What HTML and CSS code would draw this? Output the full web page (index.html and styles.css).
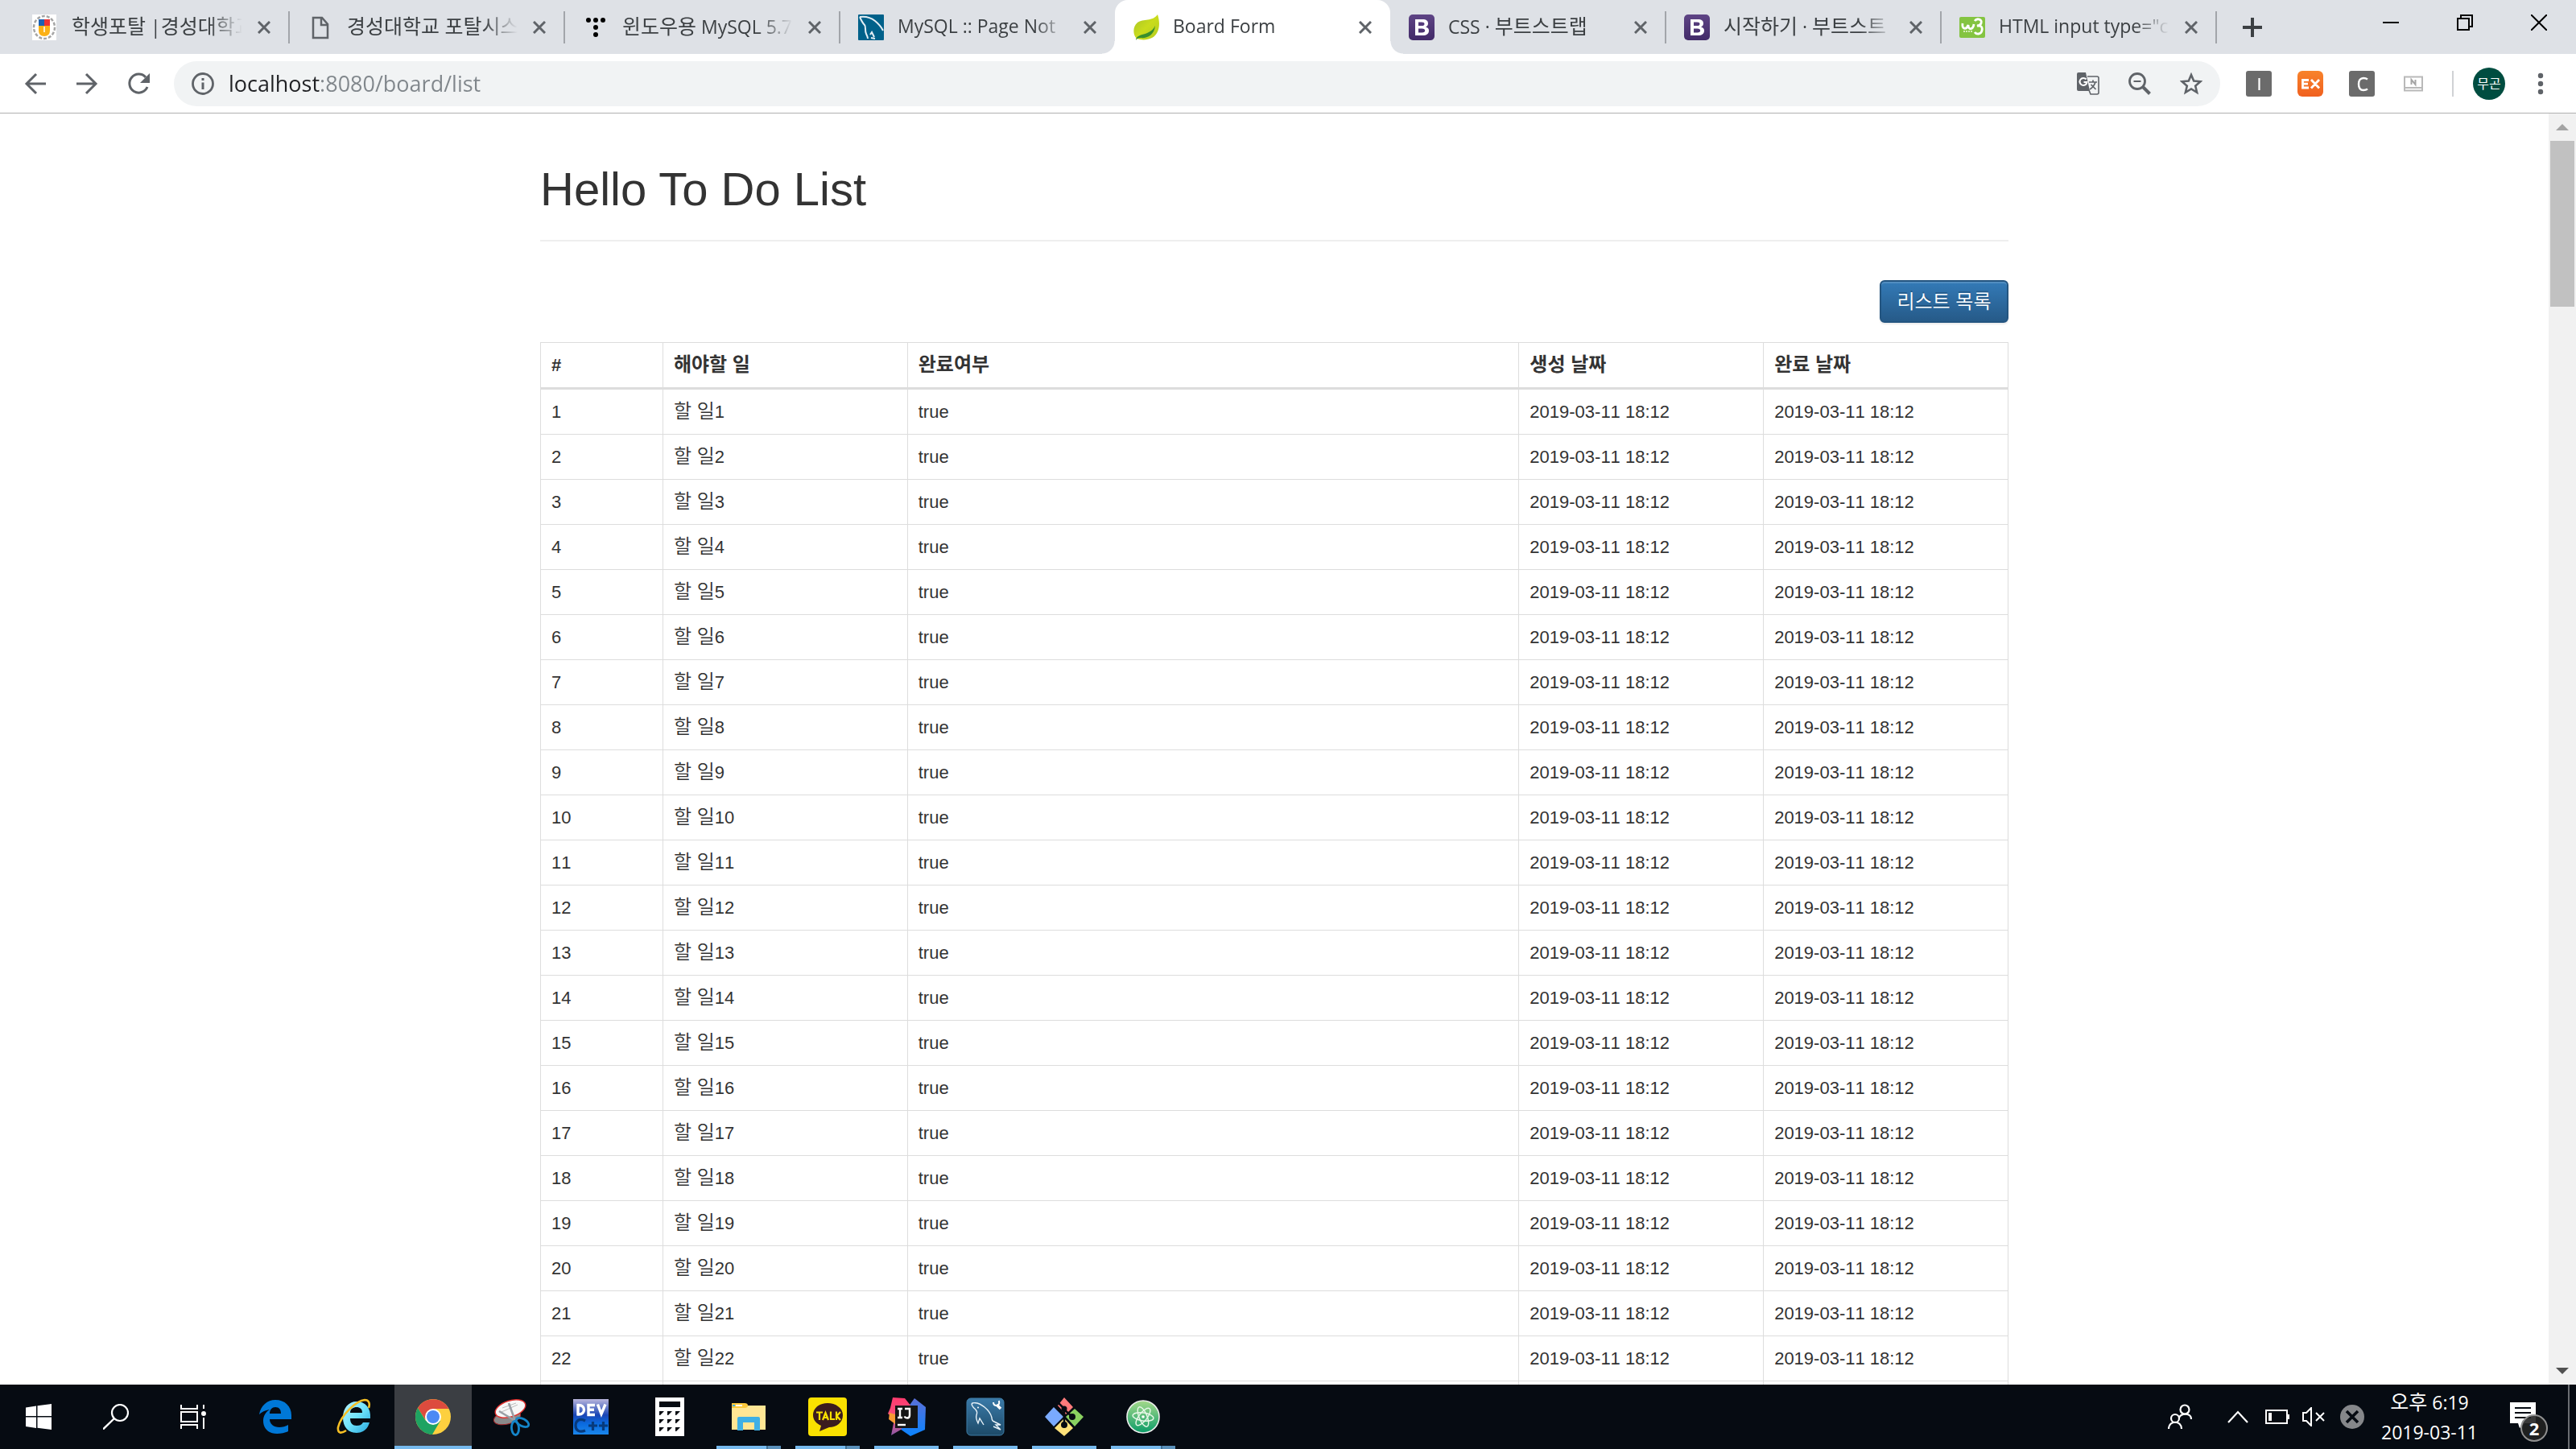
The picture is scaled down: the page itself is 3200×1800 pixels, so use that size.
FILE: index.html
```html
<!DOCTYPE html>
<html lang="ko">
<head>
<meta charset="utf-8">
<title>Board Form</title>
<link rel="stylesheet" href="styles.css">
</head>
<body>
<svg class="defs" aria-hidden="true">
  <defs>
    <linearGradient id="bs" x1="0" y1="0" x2="0" y2="1"><stop offset="0" stop-color="#5e4485"/><stop offset="1" stop-color="#422a68"/></linearGradient>
    <linearGradient id="ex" x1="0" y1="0" x2="0" y2="1"><stop offset="0" stop-color="#f8832b"/><stop offset="1" stop-color="#f0601f"/></linearGradient>
    <linearGradient id="leaf" x1="0" y1="0" x2="1" y2="1"><stop offset="0" stop-color="#a5c229"/><stop offset=".5" stop-color="#c9dc1c"/><stop offset="1" stop-color="#b4cc1f"/></linearGradient>
    <linearGradient id="ie" x1="0" y1="0" x2="1" y2="1"><stop offset="0" stop-color="#b9f2ff"/><stop offset=".5" stop-color="#6fe3fb"/><stop offset="1" stop-color="#25a4dc"/></linearGradient>
    <linearGradient id="dev" x1="0" y1="0" x2="0" y2="1"><stop offset="0" stop-color="#b9b5dc"/><stop offset=".45" stop-color="#1a45b5"/><stop offset=".7" stop-color="#0a6be0"/><stop offset="1" stop-color="#1a86ea"/></linearGradient>
    <linearGradient id="wb" x1="0" y1="0" x2="0" y2="1"><stop offset="0" stop-color="#3a7aa8"/><stop offset="1" stop-color="#1d4a68"/></linearGradient>
    <linearGradient id="atom" x1="0" y1="0" x2="0" y2="1"><stop offset="0" stop-color="#a5d98b"/><stop offset="1" stop-color="#0b9c68"/></linearGradient>
    <linearGradient id="ijr" x1="0" y1="0" x2="0" y2="1"><stop offset="0" stop-color="#5b6fd8"/><stop offset="1" stop-color="#0a84ff"/></linearGradient>
    <linearGradient id="ijl" x1="0" y1="0" x2="0" y2="1"><stop offset="0" stop-color="#ff3a6e"/><stop offset=".5" stop-color="#f5507c"/><stop offset="1" stop-color="#8a5aa8"/></linearGradient>
    <symbol id="x" viewBox="0 0 16 16"><path d="M1 1l14 14M15 1L1 15" stroke="#5f6368" stroke-width="3" fill="none"/></symbol>
    <symbol id="boot" viewBox="0 0 32 32"><rect width="32" height="32" rx="5" fill="url(#bs)"/><path d="M8 6h9c5 0 7 2 7 5 0 2-1 4-3 4.500 3 .5 4 2.500 4 4.500 0 4-3 6-7.500 6H8zM12 9.500v4.500h4c2.500 0 3.500-.8 3.500-2.300S18.500 9.500 16 9.500zM12 17.500v5h4.500c2.500 0 3.700-1 3.700-2.500s-1.200-2.500-3.700-2.500z" fill="#fff" fill-rule="evenodd"/></symbol>
  </defs>
</svg>

<header class="browser">
  <nav class="tabs" aria-label="Tabs">
    <div class="tab">
      <svg class="icon" viewBox="0 0 32 32"><rect width="30" height="32" fill="#fff"/><ellipse cx="15" cy="16" rx="13" ry="14" fill="none" stroke="#a5a5a5" stroke-width="2.500" stroke-dasharray="4 2"/><path d="M8 6h7v8H8z" fill="#1b62b5"/><path d="M15 6h7v8h-7z" fill="#e33"/><path d="M8 14h14v6q0 7-7 7t-7-7z" fill="#fbb116"/><path d="M15 15v7" stroke="#fff" stroke-width="1.500"/></svg>
      <a class="title" href="#"><span class="ko">학생포탈</span> |<span class="ko">경성대학교</span></a>
      <button class="close" aria-label="닫기"><svg><use href="#x"/></svg></button>
    </div>
    <div class="tab">
      <svg class="icon" viewBox="0 0 32 32"><path d="M7 4h11l7 8v17H7zM17 4v9h8" fill="none" stroke="#5f6368" stroke-width="2.500"/></svg>
      <a class="title" href="#"><span class="ko">경성대학교 포탈시스</span></a>
      <button class="close" aria-label="닫기"><svg><use href="#x"/></svg></button>
    </div>
    <div class="tab">
      <svg class="icon" viewBox="0 0 32 32"><g fill="#000"><circle cx="7" cy="7" r="3"/><circle cx="16" cy="7" r="3"/><circle cx="25" cy="7" r="3"/><circle cx="16" cy="16" r="3"/><circle cx="16" cy="25" r="3"/></g></svg>
      <a class="title" href="#"><span class="ko">윈도우용</span> MySQL 5.7</a>
      <button class="close" aria-label="닫기"><svg><use href="#x"/></svg></button>
    </div>
    <div class="tab before-active">
      <svg class="icon" viewBox="0 0 32 32"><rect width="32" height="32" rx="1" fill="#00618a"/><path d="M2 3c7-1 14 1 19 5s8 8 10 12M2 3c3 7 4 8 6 10s0 7 2 11 2 6 2 6M15 25l2-3 3 6M16 29l5 1" fill="none" stroke="#e4eef4" stroke-width="2"/></svg>
      <a class="title" href="#">MySQL :: Page Not</a>
      <button class="close" aria-label="닫기"><svg><use href="#x"/></svg></button>
    </div>
    <div class="tab active">
      <svg class="icon" viewBox="0 0 32 32"><path d="M30 0c4 12 2 24-7 29-6 3-13 3-19 1C-1 25-1 15 5 10 12 5 24 9 30 0z" fill="url(#leaf)"/><path d="M3 32C4 22 20 28 27 14c-1 12-11 16-18 15-3 0-5 1-6 3z" fill="#388e2d"/></svg>
      <a class="title" href="#" aria-current="page">Board Form</a>
      <button class="close" aria-label="닫기"><svg><use href="#x"/></svg></button>
    </div>
    <div class="tab">
      <svg class="icon"><use href="#boot"/></svg>
      <a class="title" href="#">CSS · <span class="ko">부트스트랩</span></a>
      <button class="close" aria-label="닫기"><svg><use href="#x"/></svg></button>
    </div>
    <div class="tab">
      <svg class="icon"><use href="#boot"/></svg>
      <a class="title" href="#"><span class="ko">시작하기</span> · <span class="ko">부트스트</span></a>
      <button class="close" aria-label="닫기"><svg><use href="#x"/></svg></button>
    </div>
    <div class="tab">
      <svg class="icon" viewBox="0 0 32 32"><rect y="3" width="32" height="26" rx="2" fill="#84c441"/><path d="M4 11c-1 8 5 8 7 2 0 7 6 6 7-1M19 8c3-4 10-2 8 3-1 2-3 3-5 3 5-1 7 2 6 6-1 5-7 5-9 2" fill="none" stroke="#fff" stroke-width="2.800"/><path d="M5 21h12" stroke="#d5edb9" stroke-width="2" stroke-dasharray="2 1"/></svg>
      <a class="title" href="#">HTML input type="c</a>
      <button class="close" aria-label="닫기"><svg><use href="#x"/></svg></button>
    </div>
    <button class="new-tab" aria-label="새 탭"><svg viewBox="0 0 24 24"><path d="M12 0v24M0 12h24" stroke="#3c4043" stroke-width="4"/></svg></button>
    <div class="window-controls">
      <button aria-label="최소화"><svg viewBox="0 0 20 20"><path d="M0 10h20" stroke="#000" stroke-width="2"/></svg></button>
      <button aria-label="이전 크기로"><svg viewBox="0 0 20 20"><path d="M1 5h14v14H1zM5 5V1h14v14h-4" fill="none" stroke="#000" stroke-width="2"/></svg></button>
      <button aria-label="창 닫기"><svg viewBox="0 0 20 20"><path d="M0 0l20 20M20 0L0 20" stroke="#000" stroke-width="2"/></svg></button>
    </div>
  </nav>

  <div class="toolbar">
    <button class="tool" aria-label="뒤로"><svg viewBox="0 0 28 28"><path d="M27 14H3M15 2L3 14l12 12" fill="none" stroke="#5f6368" stroke-width="3"/></svg></button>
    <button class="tool" aria-label="앞으로"><svg viewBox="0 0 28 28"><path d="M1 14h24M13 2l12 12-12 12" fill="none" stroke="#5f6368" stroke-width="3"/></svg></button>
    <button class="tool" aria-label="새로고침"><svg viewBox="0 0 28 28"><path d="M23 6A11.500 11.500 0 1 0 25 18" fill="none" stroke="#5f6368" stroke-width="3"/><path d="M28 1v12H16z" fill="#5f6368"/></svg></button>
    <div class="omnibox">
      <svg class="info" viewBox="0 0 28 28"><circle cx="14" cy="14" r="12.500" fill="none" stroke="#5f6368" stroke-width="2.800"/><path d="M14 12.500V21M14 7v3" stroke="#5f6368" stroke-width="3"/></svg>
      <input class="url" type="text" value="localhost:8080/board/list" aria-label="주소창">
      <button class="tool" aria-label="번역"><svg viewBox="0 0 28 28"><path d="M2 0h9l5 23H2q-2 0-2-2V2q0-2 2-2z" fill="#5f6368"/><path d="M13 5h12q2 0 2 2v18q0 2-2 2h-8l-2-5" fill="none" stroke="#5f6368" stroke-width="1.600"/><path d="M11.500 8.500A4.500 4.500 0 1 0 12.500 12H8.500" fill="none" stroke="#fff" stroke-width="2"/><path d="M15 12h10M20 9.500V12M23 12q-2 6-7 9M17.500 15l6 6" stroke="#5f6368" stroke-width="1.700" fill="none"/></svg></button>
      <button class="tool" aria-label="축소"><svg viewBox="0 0 28 28"><circle cx="11" cy="11" r="9.500" fill="none" stroke="#5f6368" stroke-width="2.800"/><path d="M6.500 11h9" stroke="#5f6368" stroke-width="2"/><path d="M17.500 17.500l9 9" stroke="#5f6368" stroke-width="4"/></svg></button>
      <button class="tool" aria-label="북마크"><svg viewBox="0 0 28 28"><path d="M14 3l3.200 7.600 8.300.7-6.300 5.400 1.900 8.100L14 20.500l-7.100 4.300 1.900-8.100-6.300-5.400 8.300-.7z" fill="none" stroke="#5f6368" stroke-width="2.600"/></svg></button>
    </div>
    <button class="tool ext" aria-label="확장 I"><svg viewBox="0 0 32 32"><rect width="32" height="32" rx="3" fill="#6b6b6b"/><path d="M16.500 9v15" stroke="#fff" stroke-width="2.200"/></svg></button>
    <button class="tool ext" aria-label="확장 EX"><svg viewBox="0 0 32 32"><rect width="32" height="32" rx="6" fill="url(#ex)"/><path d="M14 11.500H6.500v9.500H14M6.500 16.200h6.500M17 11l10 10.500M27 11L17 21.500" fill="none" stroke="#fff" stroke-width="2.800"/></svg></button>
    <button class="tool ext" aria-label="확장 C"><svg viewBox="0 0 32 32"><rect width="32" height="32" rx="3" fill="#6b6b6b"/><path d="M23 10.500q-2-1.500-5-1.500c-4 0-6 3-6 7.500s2 7.500 6 7.500q3 0 5-1.500" fill="none" stroke="#fff" stroke-width="2.400"/></svg></button>
    <button class="tool ext" aria-label="확장 N"><svg viewBox="0 0 32 32"><path d="M5 7.500h22v17H5zM5 21h22" fill="none" stroke="#b9b9b9" stroke-width="2"/><path d="M13.500 17v-6l5 6v-6" fill="none" stroke="#a5a5a5" stroke-width="2"/></svg></button>
    <span class="divider"></span>
    <button class="tool" aria-label="프로필"><span class="avatar">무곤</span></button>
    <button class="tool" aria-label="메뉴"><svg viewBox="0 0 28 28"><g fill="#5f6368"><circle cx="14" cy="4" r="3.200"/><circle cx="14" cy="14" r="3.200"/><circle cx="14" cy="24" r="3.200"/></g></svg></button>
  </div>
</header>

<div class="viewport">
  <main class="page">
    <div class="container">
      <h1>Hello To Do List</h1>
      <div class="actions"><button class="btn">리스트 목록</button></div>
      <table class="board">
        <colgroup><col class="c1"><col class="c2"><col class="c5"><col class="c2"><col class="c2"></colgroup>
        <thead><tr><th>#</th><th><span class="kt">해야할 일</span></th><th><span class="kt">완료여부</span></th><th><span class="kt">생성 날짜</span></th><th><span class="kt">완료 날짜</span></th></tr></thead>
        <tbody>
          <tr><td>1</td><td><span class="kt">할 일</span>1</td><td>true</td><td>2019-03-11 18:12</td><td>2019-03-11 18:12</td></tr>
          <tr><td>2</td><td><span class="kt">할 일</span>2</td><td>true</td><td>2019-03-11 18:12</td><td>2019-03-11 18:12</td></tr>
          <tr><td>3</td><td><span class="kt">할 일</span>3</td><td>true</td><td>2019-03-11 18:12</td><td>2019-03-11 18:12</td></tr>
          <tr><td>4</td><td><span class="kt">할 일</span>4</td><td>true</td><td>2019-03-11 18:12</td><td>2019-03-11 18:12</td></tr>
          <tr><td>5</td><td><span class="kt">할 일</span>5</td><td>true</td><td>2019-03-11 18:12</td><td>2019-03-11 18:12</td></tr>
          <tr><td>6</td><td><span class="kt">할 일</span>6</td><td>true</td><td>2019-03-11 18:12</td><td>2019-03-11 18:12</td></tr>
          <tr><td>7</td><td><span class="kt">할 일</span>7</td><td>true</td><td>2019-03-11 18:12</td><td>2019-03-11 18:12</td></tr>
          <tr><td>8</td><td><span class="kt">할 일</span>8</td><td>true</td><td>2019-03-11 18:12</td><td>2019-03-11 18:12</td></tr>
          <tr><td>9</td><td><span class="kt">할 일</span>9</td><td>true</td><td>2019-03-11 18:12</td><td>2019-03-11 18:12</td></tr>
          <tr><td>10</td><td><span class="kt">할 일</span>10</td><td>true</td><td>2019-03-11 18:12</td><td>2019-03-11 18:12</td></tr>
          <tr><td>11</td><td><span class="kt">할 일</span>11</td><td>true</td><td>2019-03-11 18:12</td><td>2019-03-11 18:12</td></tr>
          <tr><td>12</td><td><span class="kt">할 일</span>12</td><td>true</td><td>2019-03-11 18:12</td><td>2019-03-11 18:12</td></tr>
          <tr><td>13</td><td><span class="kt">할 일</span>13</td><td>true</td><td>2019-03-11 18:12</td><td>2019-03-11 18:12</td></tr>
          <tr><td>14</td><td><span class="kt">할 일</span>14</td><td>true</td><td>2019-03-11 18:12</td><td>2019-03-11 18:12</td></tr>
          <tr><td>15</td><td><span class="kt">할 일</span>15</td><td>true</td><td>2019-03-11 18:12</td><td>2019-03-11 18:12</td></tr>
          <tr><td>16</td><td><span class="kt">할 일</span>16</td><td>true</td><td>2019-03-11 18:12</td><td>2019-03-11 18:12</td></tr>
          <tr><td>17</td><td><span class="kt">할 일</span>17</td><td>true</td><td>2019-03-11 18:12</td><td>2019-03-11 18:12</td></tr>
          <tr><td>18</td><td><span class="kt">할 일</span>18</td><td>true</td><td>2019-03-11 18:12</td><td>2019-03-11 18:12</td></tr>
          <tr><td>19</td><td><span class="kt">할 일</span>19</td><td>true</td><td>2019-03-11 18:12</td><td>2019-03-11 18:12</td></tr>
          <tr><td>20</td><td><span class="kt">할 일</span>20</td><td>true</td><td>2019-03-11 18:12</td><td>2019-03-11 18:12</td></tr>
          <tr><td>21</td><td><span class="kt">할 일</span>21</td><td>true</td><td>2019-03-11 18:12</td><td>2019-03-11 18:12</td></tr>
          <tr><td>22</td><td><span class="kt">할 일</span>22</td><td>true</td><td>2019-03-11 18:12</td><td>2019-03-11 18:12</td></tr>
          <tr><td></td><td></td><td></td><td></td><td></td></tr>
        </tbody>
      </table>
    </div>
  </main>
  <div class="scrollbar" aria-hidden="true">
    <svg viewBox="0 0 34 34"><path d="M9 21l8-8 8 8z" fill="#a3a3a3"/></svg>
    <div class="thumb"></div>
    <svg class="down" viewBox="0 0 34 34"><path d="M9 13h16l-8 8z" fill="#505050"/></svg>
  </div>
</div>

<footer class="taskbar">
  <div class="system">
    <button aria-label="시작"><svg viewBox="0 0 32 32"><path d="M0 4.500L13 2.500V15H0zM14.500 2.300L32 0v15H14.500zM0 16.500h13V30L0 28zM14.500 16.500H32V32l-17.500-2.200z" fill="#fff"/></svg></button>
    <button aria-label="검색"><svg viewBox="0 0 32 32"><circle cx="21" cy="11" r="10" fill="none" stroke="#fff" stroke-width="2.200"/><path d="M14 18L0 31.500" stroke="#fff" stroke-width="2.400"/></svg></button>
    <button aria-label="작업 보기"><svg viewBox="0 0 32 32"><path d="M1 1v5h20V1M1 10h20v12H1zM1 31v-5h20v5M29 1v5M29 17v14" fill="none" stroke="#fff" stroke-width="2"/><circle cx="29" cy="12" r="3" fill="#fff"/></svg></button>
  </div>
  <div class="apps">
    <button aria-label="Edge"><svg viewBox="0 0 48 48"><path d="M4 21C6 10 14 3 24 3c12 0 20 8 20 19v5H17c0 6 5 10 12 10 4 0 8-1 11-3v8c-4 2-9 3-14 3-11 0-17-7-17-16 0-6 3-11 8-14-6 1-10 3-13 6zM17 20h14c0-5-2-8-7-8-4 0-7 3-7 8z" fill="#0078d7"/></svg></button>
    <button aria-label="Internet Explorer"><svg viewBox="0 0 48 48"><path d="M27 5c11 0 18 8 17 21H19c0 6 3 9 8 9 4 0 6-1 8-4h8c-2 8-8 13-16 13-10 0-17-7-17-19S17 5 27 5zM19 19h15c0-5-3-7-7-7s-8 2-8 7z" fill="url(#ie)"/><path d="M42 13c2-6 0-10-5-10C27 4 8 21 4 37c-1 8 4 8 10 4" fill="none" stroke="#f5bf24" stroke-width="2.600"/></svg></button>
    <button class="current" aria-label="Chrome"><svg viewBox="0 0 48 48"><circle cx="24" cy="24" r="22" fill="#fdd03f"/><path d="M5 13a22 22 0 0 1 38.500 1H24L14 27z" fill="#dd4b3e"/><path d="M5 13a22 22 0 0 0 18 33l10-17-18 0z" fill="#1ea362"/><circle cx="24" cy="24" r="10" fill="#fff"/><circle cx="24" cy="24" r="8" fill="#4a8af4"/></svg></button>
    <button aria-label="캡처 도구"><svg viewBox="0 0 48 48"><ellipse cx="18" cy="25" rx="17" ry="8" fill="#8a8a8a" stroke="#a8292b" transform="rotate(-14 18 25)"/><ellipse cx="22" cy="14" rx="19.500" ry="10" fill="#f7f7f7" stroke="#e0302e" stroke-width="1.400" transform="rotate(-18 22 14)"/><path d="M11 18l20-9M12 13l17-6" stroke="#bbb"/><path d="M20 7l8 22M8 17l20 12" stroke="#9a9fa5" stroke-width="2.600"/><ellipse cx="37" cy="31" rx="8.500" ry="4.500" fill="none" stroke="#1485c9" stroke-width="2.800" transform="rotate(28 37 31)"/><ellipse cx="28" cy="38" rx="4.500" ry="8.500" fill="none" stroke="#1485c9" stroke-width="2.800" transform="rotate(-4 28 38)"/></svg></button>
    <button aria-label="Dev-C++"><svg viewBox="0 0 48 48"><rect x="2" y="2" width="44" height="44" fill="url(#dev)"/><path d="M8 9.500v11.500c10 1 10-12.500 0-11.500zM29 9.500h-8v12h8M21 15.300h7M32.500 8.500l4.500 12 5-12" fill="none" stroke="#fff" stroke-width="3.400"/><path d="M17 29c-7-4-12 0-12 6s5 9 12 6M21 35h11M26.500 30v11M34 35h11M39.500 30v11" fill="none" stroke="#073a7c" stroke-width="3.200"/></svg></button>
    <button aria-label="계산기"><svg viewBox="0 0 48 48"><rect x="6" width="36" height="48" fill="#fff"/><path d="M11 5h26v7H11zM11 17h6l-5 5h-1zM21 17h6l-5 5h-1zM31 17h6l-5 5h-1zM11 27h6l-5 5h-1zM21 27h6l-5 5h-1zM31 27h6l-5 5h-1zM11 37h6l-5 5h-1zM21 37h6l-5 5h-1zM31 37h6l-5 5h-1z" fill="#060b12"/></svg></button>
    <button class="open stacked" aria-label="탐색기"><svg viewBox="0 0 48 48"><path d="M3 8q0-1 1-1h14l4 3h23v30H3z" fill="#ffe694"/><path d="M3 13V8q0-1 1-1h15q4 0 4 3t-4 3z" fill="#fcc93c"/><path d="M8 9h8v2H8z" fill="#fff"/><path d="M4 9h3v2H4z" fill="#3fb0e5"/><path d="M10 41V26q0-2 2-2h24q2 0 2 2v15h-7V31H17v10z" fill="#3fb0e5"/></svg></button>
    <button class="open stacked" aria-label="카카오톡"><svg viewBox="0 0 48 48"><rect width="48" height="48" rx="4" fill="#fae100"/><path d="M24 7c10 0 19 6 19 15s-8 15-17 15l-12 5 2-7C9 32 6 27 6 22 6 13 14 7 24 7z" fill="#3b1c1e"/><path d="M10 18.500h8M14 18.500V28M18 28l3.500-9 3.500 9M19.500 25h4M28 17.500V27h5M35 17.500V28M40 18l-4.500 5 4.500 5" fill="none" stroke="#fae100" stroke-width="2.200"/></svg></button>
    <button class="open" aria-label="IntelliJ"><svg viewBox="0 0 48 48"><path d="M34 1l14 11-1 28-18 8-13-9 5-20z" fill="url(#ijr)"/><path d="M7 0l15 1 8 10 1 10-14 19L5 47l4-20-8-7 3-7z" fill="url(#ijl)"/><path d="M3 19l7 2v12l-8-6z" fill="#f79a33"/><rect x="10" y="10" width="28" height="28" fill="#151515"/><path d="M13 14h6M16 14v11M13 25h6M22 14h6v8q0 3.500-3 3.500-2.500 0-3.500-2" fill="none" stroke="#fff" stroke-width="2.400"/><path d="M13 34h10" stroke="#fff" stroke-width="2.400"/></svg></button>
    <button class="open" aria-label="MySQL Workbench"><svg viewBox="0 0 48 48"><rect x="1" y="1" width="46" height="46" rx="5" fill="url(#wb)" stroke="#3f7fa8"/><path d="M12 15C8 12 6 8 8 7s4 0 6 0c4 1 6 3 9 5 5 4 8 9 9 13 0 2 0 4 3 5l8 4-6 0 6 6-9-4M12 15c2 3 2 4 1 7s0 6 2 10l2-6 5 8" fill="none" stroke="#e8f2f8" stroke-width="1.400"/><circle cx="15" cy="12.500" r="1" fill="#fff"/><path d="M38 9l5 5" stroke="#fff" stroke-width="3.600"/><path d="M34 6q0 4 4 4t3-6" fill="none" stroke="#fff" stroke-width="2"/></svg></button>
    <button class="open" aria-label="Git"><svg viewBox="0 0 48 48"><path d="M24 0l11 12-9 9-10-11z" fill="#ff7b7b"/><path d="M37 14l11 10-11 12-11-12z" fill="#8ad160"/><path d="M11 12l12 12-12 12L0 24z" fill="#7aaaff"/><path d="M24 26l11 12-11 10-12-10z" fill="#ffe27a"/><path d="M17 7l8 8M24 14v20M24 15l10 9" stroke="#060b12" stroke-width="2.500"/><circle cx="24" cy="14" r="3.500" fill="#060b12"/><circle cx="24" cy="34" r="4" fill="#060b12"/><circle cx="34" cy="24" r="4" fill="#060b12"/></svg></button>
    <button class="open stacked" aria-label="Atom"><svg viewBox="0 0 48 48"><circle cx="24" cy="24" r="20" fill="url(#atom)" stroke="#eee" stroke-width="1.600"/><g fill="none" stroke="#e8f7e8" stroke-width="1.400"><ellipse cx="24" cy="24" rx="13" ry="5" transform="rotate(8 24 24)"/><ellipse cx="24" cy="24" rx="13" ry="5" transform="rotate(68 24 24)"/><ellipse cx="24" cy="24" rx="13" ry="5" transform="rotate(128 24 24)"/></g><circle cx="24" cy="24" r="1.800" fill="#fff"/></svg></button>
  </div>
  <div class="tray">
    <button class="people" aria-label="피플"><svg width="30" height="32" viewBox="0 0 30 32"><g fill="none" stroke="#fff" stroke-width="2.200"><circle cx="9" cy="18" r="5"/><path d="M1 31c0-11 16-11 16 0"/><circle cx="21" cy="7" r="5.500"/><path d="M14 17c3-6 15-6 15 2"/></g></svg></button>
    <button class="chevron" aria-label="숨겨진 아이콘"><svg width="26" height="16" viewBox="0 0 26 16"><path d="M1 15L13 2l12 13" fill="none" stroke="#fff" stroke-width="2.200"/></svg></button>
    <button class="battery" aria-label="배터리"><svg width="30" height="18" viewBox="0 0 30 18"><path d="M1 1h26v16H1z" fill="none" stroke="#fff" stroke-width="2"/><path d="M28 6h2v6h-2zM4 4h4v10H4z" fill="#fff"/></svg></button>
    <button class="volume" aria-label="음소거"><svg width="28" height="24" viewBox="0 0 28 24"><path d="M1 7h4l6-6v22l-6-6H1zM17 7l10 10M27 7L17 17" fill="none" stroke="#fff" stroke-width="2"/></svg></button>
    <button class="status" aria-label="상태"><svg width="30" height="30" viewBox="0 0 30 30"><circle cx="15" cy="15" r="15" fill="#85878a"/><path d="M8 8l14 14M22 8L8 22" stroke="#060b12" stroke-width="3.600"/></svg></button>
    <button class="clock"><span><span class="ko">오후</span> 6:19</span><span>2019-03-11</span></button>
    <button class="notice" aria-label="알림 센터"><svg width="32" height="32" viewBox="0 0 32 32"><path d="M0 0h32v26H18l-6 6-2-6H0z" fill="#fff"/><path d="M6 7h20M6 13h20M6 19h20" stroke="#060b12" stroke-width="2"/></svg><span class="count">2</span></button>
    <button class="desktop" aria-label="바탕 화면 보기"></button>
  </div>
</footer>
</body>
</html>
```

FILE: styles.css
```css
* { box-sizing: border-box; }

body {
  margin: 0;
  height: 100vh;
  display: flex;
  flex-direction: column;
  overflow: hidden;
  background: #fff;
  color: #333;
  font-family: "Liberation Sans", "Noto Sans CJK KR", sans-serif;
  font-size: 22px;
}

button {
  border: 0;
  padding: 0;
  background: none;
  color: inherit;
  font: inherit;
}

svg { display: block; flex: none; }
.defs { position: absolute; width: 0; height: 0; }

/* Browser chrome */
.browser, .taskbar { flex: none; font-family: "Open Sans", "Noto Sans CJK KR", sans-serif; }
.ko { font-size: 25px; }

.tabs {
  display: flex;
  height: 67px;
  padding-left: 17px;
  background: #dee1e6;
}

.tab {
  position: relative;
  flex: 0 1 342px;
  min-width: 0;
  display: flex;
  align-items: center;
  padding: 0 23px;
}
.tab::after {
  content: "";
  position: absolute;
  right: -1px;
  top: 14px;
  width: 2px;
  height: 40px;
  background: #a2a5aa;
}
.tab.before-active::after { display: none; }

.tab.active { background: #fff; border-radius: 16px 16px 0 0; }
.tab.active::before, .tab.active::after {
  content: "";
  position: absolute;
  top: auto;
  bottom: 0;
  width: 16px;
  height: 16px;
}
.tab.active::before { left: -16px; background: radial-gradient(circle at 0 0, #dee1e6 15px, #fff 16px); }
.tab.active::after { right: -16px; background: radial-gradient(circle at 100% 0, #dee1e6 15px, #fff 16px); }

.icon { width: 32px; height: 32px; }
.title {
  flex: 1;
  min-width: 0;
  margin: 0 15px 0 17px;
  padding-bottom: 3px;
  overflow: hidden;
  white-space: nowrap;
  color: #3c4043;
  font-size: 23px;
  line-height: 40px;
  text-decoration: none;
  -webkit-mask-image: linear-gradient(90deg, #000 calc(100% - 46px), transparent calc(100% - 4px));
  mask-image: linear-gradient(90deg, #000 calc(100% - 46px), transparent calc(100% - 4px));
}
.close svg { width: 16px; height: 16px; }

.new-tab { width: 90px; display: flex; align-items: center; justify-content: center; }
.new-tab svg { width: 24px; height: 24px; }

.window-controls { display: flex; margin-left: auto; height: 56px; }
.window-controls button { width: 92px; display: flex; align-items: center; justify-content: center; }
.window-controls svg { width: 20px; height: 20px; }

.toolbar {
  display: flex;
  align-items: center;
  height: 74px;
  padding: 0 12px;
  border-bottom: 1px solid #b0b0b0;
  background: #fff;
}
.tool { flex: none; width: 64px; height: 56px; display: flex; align-items: center; justify-content: center; }
.tool svg { width: 28px; height: 28px; }
.tool.ext svg { width: 32px; height: 32px; }

.omnibox {
  flex: 1;
  display: flex;
  align-items: center;
  height: 56px;
  margin: 0 16px 0 12px;
  padding: 0 4px 0 22px;
  border-radius: 28px;
  background: #f1f3f4;
}
.info { width: 28px; height: 28px; }
.url {
  flex: 1;
  min-width: 0;
  height: 40px;
  margin-left: 18px;
  padding: 0;
  border: 0;
  outline: 0;
  background: linear-gradient(90deg, #202124 113px, #80868b 113px);
  -webkit-background-clip: text;
  background-clip: text;
  color: transparent;
  font: 27px/40px "Open Sans", "Noto Sans CJK KR", sans-serif;
}
.divider { width: 2px; height: 32px; margin: 0 12px 0 16px; background: #d0d2d5; }
.avatar {
  width: 40px;
  height: 40px;
  border-radius: 50%;
  background: #004d40;
  color: #fff;
  font-size: 16px;
  line-height: 40px;
  text-align: center;
}

/* Page */
.viewport { flex: 1; min-height: 0; display: flex; overflow: hidden; }
.page { flex: 1; min-width: 0; overflow: hidden; }
.container { max-width: 1824px; margin: 0 auto; padding-top: 63px; }

h1 {
  margin: 0;
  padding-bottom: 32px;
  border-bottom: 2px solid #eee;
  font-size: 58px;
  font-weight: 400;
  line-height: 62px;
}

.actions { display: flex; justify-content: flex-end; margin: 48px 0 24px; }
.btn {
  width: 160px;
  height: 53px;
  border: 2px solid #245580;
  border-radius: 6px;
  background: linear-gradient(#337ab7, #265a88);
  box-shadow: inset 0 2px 0 rgba(255, 255, 255, .15), 0 2px 2px rgba(0, 0, 0, .08);
  color: #fff;
  font-size: 24px;
  font-weight: 350;
  line-height: 31px;
  text-shadow: 0 -2px 0 rgba(0, 0, 0, .2);
}

.board { width: 100%; table-layout: fixed; border-collapse: collapse; font-kerning: none; }
.c1 { width: 8.3333%; }
.c2 { width: 16.6667%; }
.c5 { width: 41.6667%; }
.board th, .board td {
  height: 56px;
  padding: 12px 13px;
  border: 1px solid #ddd;
  line-height: 31px;
  text-align: left;
  vertical-align: top;
}
.board th { border-bottom: 3px solid #ddd; }
.kt { font-size: 24px; line-height: 24px; }
.board td .kt { font-weight: 350; }

.scrollbar { flex: none; width: 34px; display: flex; flex-direction: column; background: #f1f1f1; }
.scrollbar svg { width: 34px; height: 34px; }
.thumb { height: 206px; margin: 0 2px; background: #c1c1c1; }
.down { margin-top: auto; }

/* Taskbar */
.taskbar { display: flex; height: 80px; background: #060b12; color: #fff; }
.system, .apps, .tray { display: flex; }
.system button { width: 96px; }
.taskbar button { position: relative; display: flex; align-items: center; justify-content: center; }
.system svg { width: 32px; height: 32px; }
.apps { gap: 2px; margin-left: 6px; }
.apps button { width: 96px; }
.apps svg { width: 48px; height: 48px; }
.apps .current { background: #3b3e43; box-shadow: inset 0 -4px #76b9ed; }
.apps .open::after {
  content: "";
  position: absolute;
  left: 8px;
  right: 8px;
  bottom: 0;
  height: 4px;
  background: #76b9ed;
}
.apps .stacked::after { background: linear-gradient(90deg, #76b9ed 62px, #3f6e92 62px, #3f6e92 64px, #5a90ba 64px); }

.tray { margin-left: auto; }
.people { width: 92px; }
.chevron { width: 52px; }
.battery { width: 46px; }
.volume { width: 44px; }
.status { width: 52px; }
.taskbar .clock {
  width: 140px;
  padding-top: 2px;
  flex-direction: column;
  font-size: 23px;
  line-height: 37px;
  white-space: nowrap;
}
.clock .ko { line-height: 24px; }
.notice { width: 102px; }
.notice svg { margin-right: 10px; margin-bottom: 4px; }
.count {
  position: absolute;
  left: 43px;
  top: 37px;
  width: 34px;
  height: 34px;
  border: 2px solid #909090;
  border-radius: 50%;
  background: rgba(34, 34, 34, .9);
  font-size: 22px;
  font-weight: 700;
  line-height: 30px;
  text-align: center;
}
.desktop { width: 10px; border-left: 2px solid #6b6e72; }
```
